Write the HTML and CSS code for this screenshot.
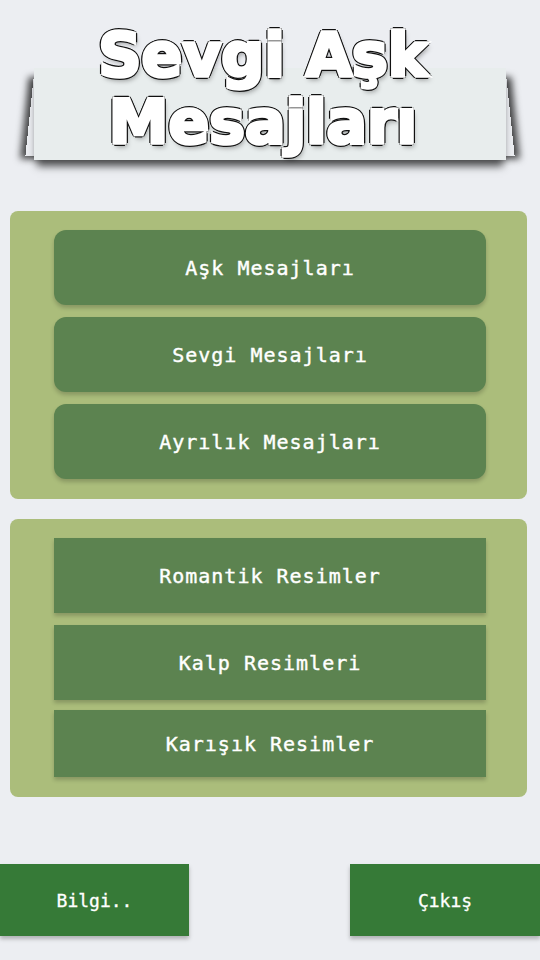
FILE: index.html
```html
<!DOCTYPE html>
<html lang="tr">
<head>
  <meta charset="UTF-8">
  <title>Sevgi Aşk Mesajları</title>
  <link rel="stylesheet" href="styles.css">
</head>
<body>
  <div class="header">
    <div class="banner">
      <h1 class="title">Sevgi Aşk<br>Mesajları</h1>
    </div>
  </div>

  <div class="panel">
    <button class="menu-btn round">Aşk Mesajları</button>
    <button class="menu-btn round">Sevgi Mesajları</button>
    <button class="menu-btn round">Ayrılık Mesajları</button>
  </div>

  <div class="panel">
    <button class="menu-btn">Romantik Resimler</button>
    <button class="menu-btn">Kalp Resimleri</button>
    <button class="menu-btn short">Karışık Resimler</button>
  </div>

  <div class="bottom-bar">
    <button class="bottom-btn">Bilgi..</button>
    <button class="bottom-btn">Çıkış</button>
  </div>
</body>
</html>
```

FILE: styles.css
```css
body {
  margin: 0;
  padding: 0;
  background: #eceef2;
  font-family: 'DejaVu Sans Mono', monospace;
  width: 540px;
  height: 960px;
  overflow: hidden;
}

.header {
  padding-top: 68px;
  padding-left: 34px;
}

.banner {
  position: relative;
  width: 472px;
  height: 92px;
  background: #e8eded;
  box-shadow: 0 9px 8px -3px rgba(0, 0, 0, 0.7);
}

/* curled side shadows */
.banner::before, .banner::after {
  content: "";
  position: absolute;
  z-index: -1;
  top: 6px;
  bottom: 4px;
  width: 20px;
  transform-origin: top center;
}

.banner::before {
  left: 0;
  box-shadow: -5px 3px 7px rgba(0, 0, 0, 0.7);
  transform: skewX(-6deg);
}

.banner::after {
  right: 0;
  box-shadow: 5px 3px 7px rgba(0, 0, 0, 0.7);
  transform: skewX(6deg);
}

.title {
  margin: 0;
  position: relative;
  top: -46px;
  padding-right: 14px;
  text-align: center;
  font-family: 'DejaVu Sans', sans-serif;
  font-weight: bold;
  font-size: 60px;
  line-height: 67px;
  color: #fff;
  -webkit-text-stroke: 3.5px #fff;
  text-shadow:
    3px 0 0 #111, -3px 0 0 #111, 0 3px 0 #111, 0 -3px 0 #111,
    2px 2px 0 #111, -2px 2px 0 #111, 2px -2px 0 #111, -2px -2px 0 #111,
    2px 4px 5px rgba(0, 0, 0, 0.35);
}

.panel {
  margin: 51px 13px 0 10px;
  padding: 19px 41px 20px 44px;
  background: #abbd7b;
  border-radius: 8px;
  display: flex;
  flex-direction: column;
  gap: 12px;
}

.panel + .panel {
  margin-top: 20px;
}

.menu-btn {
  height: 75px;
  border: none;
  background: #5c8350;
  color: #fff;
  font-family: 'DejaVu Sans Mono', monospace;
  font-size: 20px;
  letter-spacing: 1px;
  -webkit-text-stroke: 0.4px #fff;
  box-shadow: 0 3px 4px rgba(0, 0, 0, 0.2);
  cursor: pointer;
}

.menu-btn.round {
  border-radius: 12px;
}

.menu-btn.short {
  height: 67px;
  margin-top: -2px;
}

.bottom-bar {
  margin-top: 67px;
  display: flex;
  justify-content: space-between;
}

.bottom-btn {
  width: 189px;
  height: 72px;
  border: none;
  background: #367a37;
  color: #fff;
  font-family: 'DejaVu Sans Mono', monospace;
  font-size: 18px;
  -webkit-text-stroke: 0.3px #fff;
  box-shadow: 0 3px 4px rgba(0, 0, 0, 0.25);
}

.bottom-btn:last-child {
  width: 190px;
}
```
